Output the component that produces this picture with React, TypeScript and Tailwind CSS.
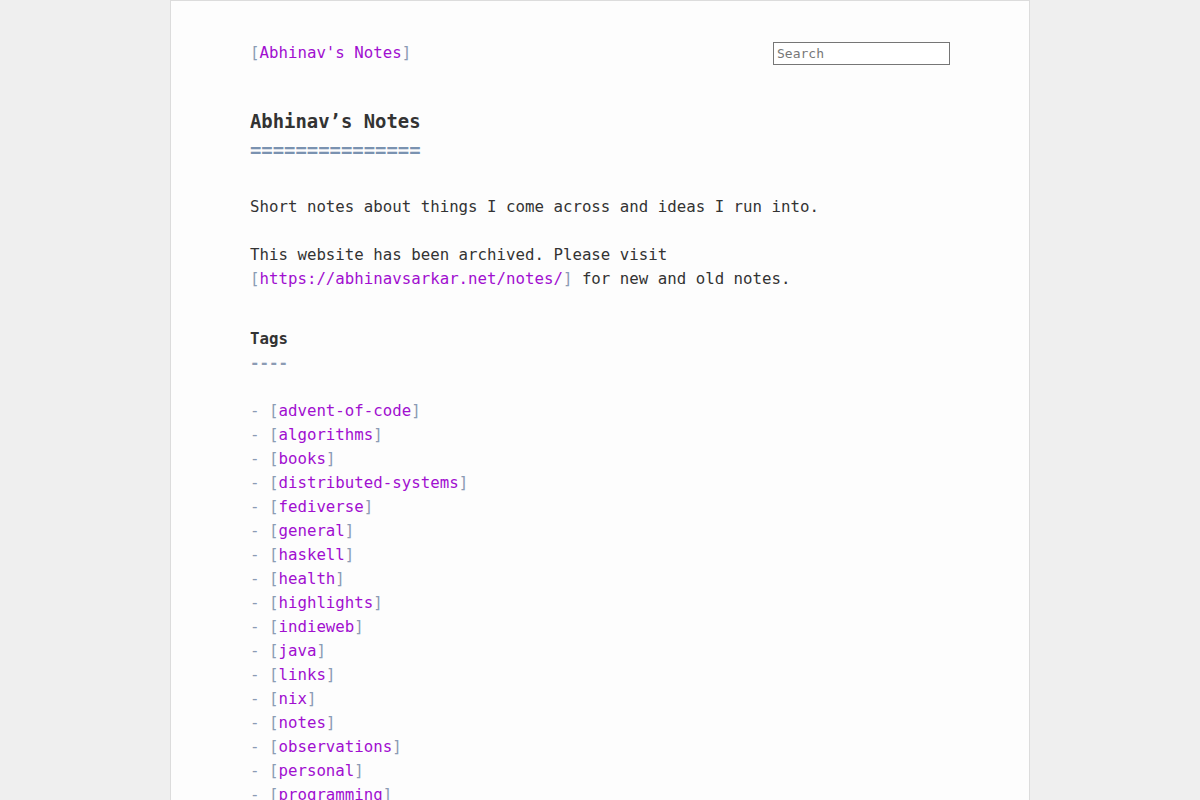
const tags = [
  "advent-of-code",
  "algorithms",
  "books",
  "distributed-systems",
  "fediverse",
  "general",
  "haskell",
  "health",
  "highlights",
  "indieweb",
  "java",
  "links",
  "nix",
  "notes",
  "observations",
  "personal",
  "programming",
  "reviews",
  "software",
];

// bracketed link, the brackets are dimmed like markdown syntax
const BLink = ({ href, children }: { href: string; children: React.ReactNode }) => (
  <span>
    <span className="text-[#8b9bb4]">[</span>
    <a href={href} className="text-[#a10fd0] no-underline">
      {children}
    </a>
    <span className="text-[#8b9bb4]">]</span>
  </span>
);

export default function App() {
  return (
    <div className="min-h-screen bg-[#efefef] font-['DejaVu_Sans_Mono',monospace] text-[15.75px] leading-[24px] text-[#333]">
      <div className="mx-auto w-[860px] min-h-screen bg-[#fdfdfd] border border-[#dcdcdc] px-[79px] pt-[40px] pb-10">
        {/* header bar */}
        <header className="flex items-start justify-between">
          <BLink href="#">Abhinav's Notes</BLink>
          <input
            type="text"
            placeholder="Search"
            className="mt-[1px] w-[177px] h-[23px] border border-[#767676] bg-white px-[3px] text-[13px] leading-[21px] text-[#333] placeholder:text-[#777] outline-none font-['DejaVu_Sans_Mono',monospace]"
          />
        </header>

        <main>
          <h1 className="mt-[42px] text-[18.9px] leading-[29px] font-bold">
            <div>Abhinav’s Notes</div>
            <div className="text-[#7a92b0]">===============</div>
          </h1>

          <p className="mt-[30px]">Short notes about things I come across and ideas I run into.</p>

          <p className="mt-[24px]">
            This website has been archived. Please visit
            <br />
            <BLink href="https://abhinavsarkar.net/notes/">https://abhinavsarkar.net/notes/</BLink> for new and old
            notes.
          </p>

          <h2 className="mt-[36px] font-bold">
            <div>Tags</div>
            <div className="text-[#8b9bb4]">----</div>
          </h2>

          <ul className="mt-[24px]">
            {tags.map((t) => (
              <li key={t}>
                <span className="text-[#8b9bb4]">- </span>
                <BLink href={`#${t}`}>{t}</BLink>
              </li>
            ))}
          </ul>
        </main>
      </div>
    </div>
  );
}
